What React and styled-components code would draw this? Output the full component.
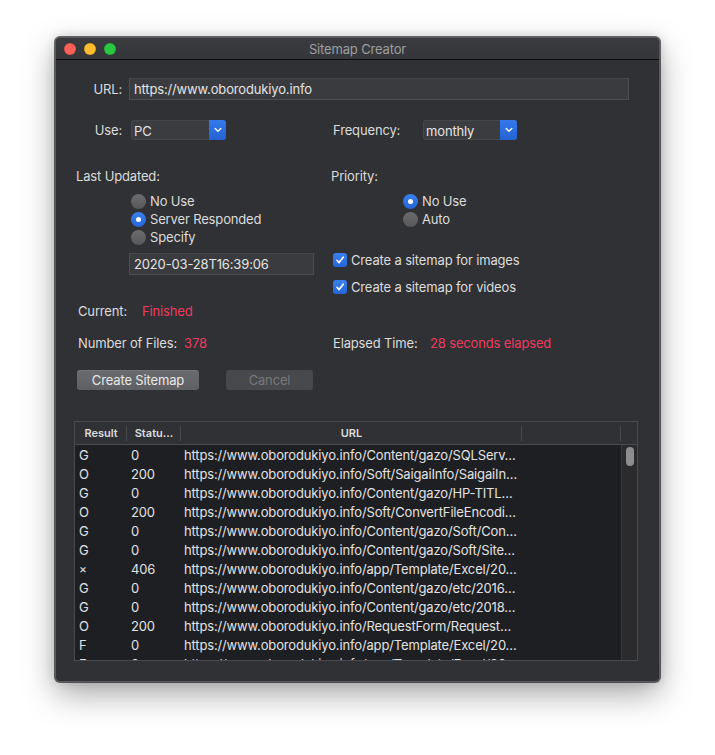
import React from "react";
import styled, { createGlobalStyle } from "styled-components";

const Global = createGlobalStyle`
  html, body { margin: 0; padding: 0; background: #ffffff; }
  body { font-family: "Inter", "Noto Sans", "Liberation Sans", sans-serif; }
  * { box-sizing: border-box; }
`;

const Page = styled.div`
  padding: 37px 0 0 55px;
  width: 715px;
  height: 755px;
`;

const Window = styled.div`
  width: 605px;
  background: #303134;
  border: 1px solid #58595c;
  border-radius: 5px;
  box-shadow: 0 0 0 1px rgba(0, 0, 0, 0.55), 0 12px 32px rgba(0, 0, 0, 0.35),
    0 0 12px rgba(0, 0, 0, 0.15);
  overflow: hidden;
  color: #dedede;
  font-size: 13px;
  letter-spacing: -0.15px;
`;

const TitleBar = styled.div`
  height: 22px;
  position: relative;
  display: flex;
  align-items: center;
  justify-content: center;
  background: linear-gradient(#3a3b3e, #353639);
  border-bottom: 1px solid #0d0d0e;
  color: #9e9ea0;
  font-size: 13px;
`;

const Lights = styled.div`
  position: absolute;
  left: 8px;
  top: 5px;
  display: flex;
  gap: 8px;
`;

const Light = styled.span`
  width: 12px;
  height: 12px;
  border-radius: 50%;
  background: ${(p) => p.$c};
  box-shadow: inset 0 0 0 0.5px rgba(0, 0, 0, 0.2);
`;

const Content = styled.div`
  display: flex;
  flex-direction: column;
  padding: 0 21px 20px 18px;
`;

const Row = styled.div`
  display: flex;
  align-items: center;
  margin-top: ${(p) => p.$mt || 0}px;
  padding-left: ${(p) => p.$pl || 0}px;
`;

const TwoCol = styled.div`
  display: grid;
  grid-template-columns: 257px 1fr;
  margin-top: ${(p) => p.$mt || 0}px;
`;

const Col = styled.div`
  display: flex;
  flex-direction: column;
  padding-left: ${(p) => p.$pl || 0}px;
  margin-top: ${(p) => p.$mt || 0}px;
`;

const Label = styled.span`
  display: inline-block;
  width: ${(p) => (p.$w ? `${p.$w}px` : "auto")};
  text-align: ${(p) => (p.$right ? "right" : "left")};
  line-height: 16px;
  white-space: nowrap;
  flex-shrink: 0;
  color: #dcdcdc;
`;

const Value = styled.span`
  color: #ee3b5f;
  line-height: 16px;
  white-space: nowrap;
`;

const TextField = styled.div`
  height: 22px;
  width: ${(p) => (p.$w ? `${p.$w}px` : "auto")};
  flex: ${(p) => (p.$w ? "none" : 1)};
  margin-left: ${(p) => p.$ml || 0}px;
  margin-right: ${(p) => p.$mr || 0}px;
  background: #3a3b3e;
  border: 1px solid #4d4e51;
  border-top-color: #45464a;
  padding: 0 4px;
  display: flex;
  align-items: center;
  color: #e4e4e4;
  white-space: nowrap;
`;

const Popup = styled.div`
  height: 20px;
  width: ${(p) => p.$w}px;
  margin-left: ${(p) => p.$ml || 0}px;
  display: flex;
  border-radius: 3px;
  overflow: hidden;
  background: #3b3c40;
  box-shadow: inset 0 0 0 1px #46474a;
`;

const PopupText = styled.span`
  flex: 1;
  padding: 2px 3px 0;
  display: flex;
  align-items: center;
  line-height: 20px;
  color: #e4e4e4;
`;

const PopupArrow = styled.span`
  width: 17px;
  background: linear-gradient(#3479ec, #2462d2);
  display: flex;
  align-items: center;
  justify-content: center;
`;

const RadioRow = styled.label`
  display: flex;
  align-items: center;
  height: 18px;
  gap: 4px;
  color: #dcdcdc;
`;

const RadioDot = styled.span`
  width: 15px;
  height: 15px;
  border-radius: 50%;
  display: flex;
  align-items: center;
  justify-content: center;
  background: ${(p) =>
    p.$on
      ? "linear-gradient(#3a7ff0, #2565d8)"
      : "linear-gradient(#6c6c6e, #58585a)"};
  &::after {
    content: "";
    width: 5px;
    height: 5px;
    border-radius: 50%;
    background: #ffffff;
    display: ${(p) => (p.$on ? "block" : "none")};
  }
`;

const CheckRow = styled.label`
  display: flex;
  align-items: center;
  height: 18px;
  gap: 4px;
  margin-top: ${(p) => p.$mt || 0}px;
  padding-left: 2px;
  color: #dcdcdc;
`;

const CheckBox = styled.span`
  width: 14px;
  height: 14px;
  border-radius: 3px;
  background: linear-gradient(#3a7ff0, #2565d8);
  display: flex;
  align-items: center;
  justify-content: center;
`;

const Button = styled.button`
  height: 20px;
  width: ${(p) => p.$w}px;
  margin-left: ${(p) => p.$ml || 0}px;
  border: none;
  border-radius: 3px;
  font-family: inherit;
  font-size: 13px;
  letter-spacing: -0.15px;
  padding: 0;
  color: ${(p) => (p.$disabled ? "#77787b" : "#e8e8e8")};
  background: ${(p) =>
    p.$disabled ? "#48494c" : "linear-gradient(#6a6b6e, #5f6063)"};
  box-shadow: ${(p) =>
    p.$disabled ? "none" : "inset 0 1px 0 rgba(255,255,255,0.08)"};
`;

const Table = styled.div`
  margin-top: 31px;
  height: 240px;
  border: 1px solid #4a4b4e;
  display: flex;
  flex-direction: column;
  overflow: hidden;
`;

const Header = styled.div`
  height: 23px;
  flex: none;
  display: grid;
  grid-template-columns: 52px 54px 341px 99px 16px;
  background: #303134;
  border-bottom: 1px solid #4a4b4e;
`;

const HeadCell = styled.div`
  display: flex;
  align-items: center;
  justify-content: center;
  font-size: 11px;
  font-weight: 600;
  letter-spacing: 0;
  color: #dcdcdc;
  position: relative;
  white-space: nowrap;
  &::after {
    content: "";
    position: absolute;
    right: 0;
    top: 4px;
    bottom: 3px;
    width: 1px;
    background: ${(p) => (p.$sep ? "#4a4b4e" : "transparent")};
  }
`;

const Body = styled.div`
  flex: 1;
  display: flex;
  background: #1e1f22;
  overflow: hidden;
`;

const Rows = styled.div`
  flex: 1;
  display: flex;
  flex-direction: column;
`;

const DataRow = styled.div`
  height: 19px;
  flex: none;
  display: grid;
  grid-template-columns: 52px 54px 341px;
  align-items: center;
  color: #e2e2e2;
  font-size: 13px;
  white-space: nowrap;
`;

const Cell = styled.span`
  padding-left: ${(p) => p.$pl || 0}px;
  overflow: hidden;
  font-size: ${(p) => p.$fs || 13}px;
`;

const Scroll = styled.div`
  width: 16px;
  flex: none;
  background: #2b2b2d;
  border-left: 1px solid #3a3a3c;
  padding: 2px 0 0 4px;
`;

const Thumb = styled.div`
  width: 8px;
  height: 19px;
  border-radius: 4px;
  background: #8d8d8f;
`;

const Chevron = () => (
  <svg width="8" height="6" viewBox="0 0 8 6">
    <path d="M1.2 1.6 L4 4.3 L6.8 1.6" fill="none" stroke="#fff" strokeWidth="1.4" strokeLinecap="round" strokeLinejoin="round" />
  </svg>
);

const Check = () => (
  <svg width="10" height="10" viewBox="0 0 10 10">
    <path d="M2 5.3 L4.1 7.6 L8.2 2.2" fill="none" stroke="#fff" strokeWidth="1.7" strokeLinecap="round" strokeLinejoin="round" />
  </svg>
);

const P = "https://www.oborodukiyo.info/";
const rows = [
  ["G", "0", P + "Content/gazo/SQLServ…"],
  ["O", "200", P + "Soft/SaigaiInfo/SaigaiIn…"],
  ["G", "0", P + "Content/gazo/HP-TITL…"],
  ["O", "200", P + "Soft/ConvertFileEncodi…"],
  ["G", "0", P + "Content/gazo/Soft/Con…"],
  ["G", "0", P + "Content/gazo/Soft/Site…"],
  ["×", "406", P + "app/Template/Excel/20…"],
  ["G", "0", P + "Content/gazo/etc/2016…"],
  ["G", "0", P + "Content/gazo/etc/2018…"],
  ["O", "200", P + "RequestForm/Request…"],
  ["F", "0", P + "app/Template/Excel/20…"],
  ["F", "0", P + "app/Template/Excel/20…"],
];

export default function App() {
  return (
    <Page>
      <Global />
      <Window>
        <TitleBar>
          <Lights>
            <Light $c="#fe5f57" />
            <Light $c="#febc2e" />
            <Light $c="#28c840" />
          </Lights>
          Sitemap Creator
        </TitleBar>
        <Content>
          <Row $mt={18}>
            <Label $w={48} $right>URL:</Label>
            <TextField $ml={7} $mr={9}>https://www.oborodukiyo.info</TextField>
          </Row>

          <TwoCol $mt={20}>
            <Row>
              <Label $w={48} $right>Use:</Label>
              <Popup $w={95} $ml={9}>
                <PopupText>PC</PopupText>
                <PopupArrow><Chevron /></PopupArrow>
              </Popup>
            </Row>
            <Row $pl={2}>
              <Label $w={90}>Frequency:</Label>
              <Popup $w={94}>
                <PopupText>monthly</PopupText>
                <PopupArrow><Chevron /></PopupArrow>
              </Popup>
            </Row>
          </TwoCol>

          <TwoCol $mt={28}>
            <Col $pl={2}>
              <Label>Last Updated:</Label>
              <Col $pl={55} $mt={8}>
                <RadioRow><RadioDot />No Use</RadioRow>
                <RadioRow><RadioDot $on />Server Responded</RadioRow>
                <RadioRow><RadioDot />Specify</RadioRow>
              </Col>
              <Row $mt={7} $pl={53}>
                <TextField $w={185}>2020-03-28T16:39:06</TextField>
              </Row>
            </Col>
            <Col>
              <Label>Priority:</Label>
              <Col $pl={72} $mt={8}>
                <RadioRow><RadioDot $on />No Use</RadioRow>
                <RadioRow><RadioDot />Auto</RadioRow>
              </Col>
              <CheckRow $mt={23}><CheckBox><Check /></CheckBox>Create a sitemap for images</CheckRow>
              <CheckRow $mt={9}><CheckBox><Check /></CheckBox>Create a sitemap for videos</CheckRow>
            </Col>
          </TwoCol>

          <Row $mt={7} $pl={4}>
            <Label $w={64}>Current:</Label>
            <Value>Finished</Value>
          </Row>

          <TwoCol $mt={16}>
            <Row $pl={4}>
              <Label $w={106}>Number of Files:</Label>
              <Value>378</Value>
            </Row>
            <Row $pl={2}>
              <Label $w={97}>Elapsed Time:</Label>
              <Value>28 seconds elapsed</Value>
            </Row>
          </TwoCol>

          <Row $mt={19} $pl={3}>
            <Button $w={122}>Create Sitemap</Button>
            <Button $w={87} $ml={27} $disabled>Cancel</Button>
          </Row>

          <Table>
            <Header>
              <HeadCell $sep>Result</HeadCell>
              <HeadCell $sep>Statu…</HeadCell>
              <HeadCell $sep>URL</HeadCell>
              <HeadCell $sep />
              <HeadCell />
            </Header>
            <Body>
              <Rows>
                {rows.map((r, i) => (
                  <DataRow key={i}>
                    <Cell $pl={4} $fs={r[0] === "×" ? 12 : 13}>{r[0]}</Cell>
                    <Cell $pl={4}>{r[1]}</Cell>
                    <Cell $pl={3}>{r[2]}</Cell>
                  </DataRow>
                ))}
              </Rows>
              <Scroll><Thumb /></Scroll>
            </Body>
          </Table>
        </Content>
      </Window>
    </Page>
  );
}
